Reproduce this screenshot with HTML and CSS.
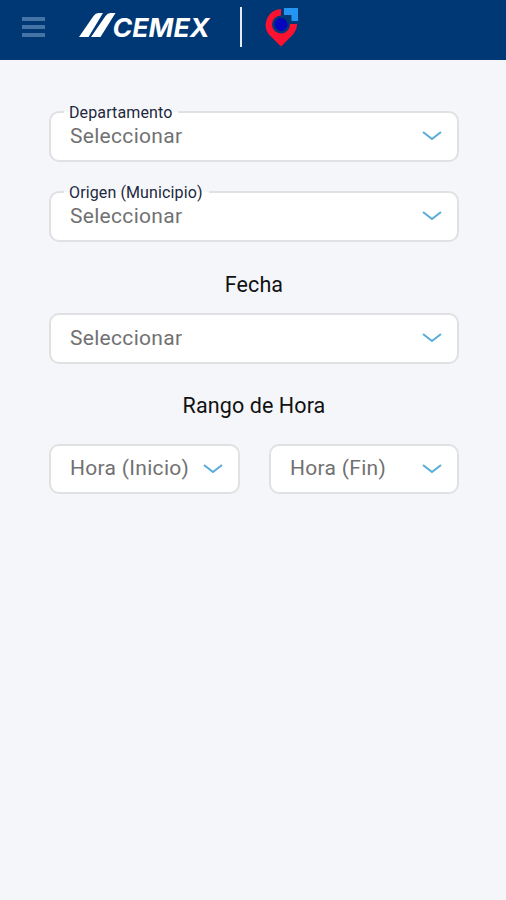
FILE: index.html
```html
<!DOCTYPE html>
<html lang="es">
<head>
    <meta charset="UTF-8">
    <meta name="viewport" content="width=device-width, initial-scale=1.0">
    <title>CEMEX</title>
    <link rel="stylesheet" href="styles.css">
</head>
<body>
    <header class="navbar">
        <button class="menu-button" type="button" aria-label="Menu">
            <span></span>
            <span></span>
            <span></span>
        </button>
        <svg class="logo" width="134" height="30" viewBox="0 0 134 30">
            <path d="M0 25 L14.500 4 Q16.500 1 19.500 1 H24 L9.500 25 Z M12 25 L26.500 4 Q28.500 1 31.500 1 H36.500 L21.500 25 Z" fill="#fff"/>
            <text class="logo-text" x="33.500" y="25" textLength="97" lengthAdjust="spacingAndGlyphs">CEMEX</text>
        </svg>
        <span class="divider"></span>
        <svg class="pin" width="36" height="40" viewBox="0 0 36 40">
            <path d="M17 2 A16 16 0 0 0 4.500 27 L17 39.500 L29.500 27 Q33.500 22 33 17 H26 A9 9 0 1 1 17 8.500 Z" fill="#fb1230"/>
            <circle cx="17" cy="17.500" r="6.500" fill="#0505bd"/>
            <path d="M20 1 H34 V14 H27.500 V8 H20 Z" fill="#2595f3"/>
        </svg>
    </header>

    <main class="form-container">
        <div class="select-field">
            <span class="field-label">Departamento</span>
            <span class="field-value">Seleccionar</span>
            <svg class="chevron" width="20" height="12" viewBox="0 0 20 12"><path d="M1 2 L10 9 L19 2"/></svg>
        </div>
        <div class="select-field">
            <span class="field-label">Origen (Municipio)</span>
            <span class="field-value">Seleccionar</span>
            <svg class="chevron" width="20" height="12" viewBox="0 0 20 12"><path d="M1 2 L10 9 L19 2"/></svg>
        </div>

        <h2 class="section-title">Fecha</h2>
        <div class="select-field">
            <span class="field-value">Seleccionar</span>
            <svg class="chevron" width="20" height="12" viewBox="0 0 20 12"><path d="M1 2 L10 9 L19 2"/></svg>
        </div>

        <h2 class="section-title section-title-hour">Rango de Hora</h2>
        <div class="hour-row">
            <div class="select-field">
                <span class="field-value">Hora (Inicio)</span>
                <svg class="chevron" width="20" height="12" viewBox="0 0 20 12"><path d="M1 2 L10 9 L19 2"/></svg>
            </div>
            <div class="select-field">
                <span class="field-value">Hora (Fin)</span>
                <svg class="chevron" width="20" height="12" viewBox="0 0 20 12"><path d="M1 2 L10 9 L19 2"/></svg>
            </div>
        </div>
    </main>
</body>
</html>
```
FILE: styles.css
```css
* {
  box-sizing: border-box;
}

body {
  margin: 0;
  min-height: 100vh;
  background-color: #f4f6fa;
  font-family: Roboto, "Liberation Sans", sans-serif;
}

.navbar {
  display: flex;
  align-items: center;
  height: 60px;
  padding: 0 22px 6px;
  background-color: #003876;
}

.menu-button {
  display: flex;
  flex-direction: column;
  gap: 4px;
  width: 23px;
  padding: 0;
  border: none;
  background: none;
  cursor: pointer;
}

.menu-button span {
  height: 4px;
  background-color: #4573a6;
}

.logo {
  margin-left: 34px;
}

.logo-text {
  fill: #fff;
  font-family: Inter, "Liberation Sans", sans-serif;
  font-size: 26px;
  font-weight: 700;
  font-style: italic;
}

.divider {
  width: 2px;
  height: 40px;
  margin-left: 27px;
  background-color: #e3ebf5;
}

.pin {
  margin-left: 22px;
}

.form-container {
  padding: 51px 47px 0 49px;
}

.select-field {
  position: relative;
  display: flex;
  justify-content: space-between;
  align-items: center;
  height: 51px;
  padding: 0 15px 1px 19px;
  border: 2px solid #e0e1e3;
  border-radius: 10px;
  background-color: #fff;
}

.select-field + .select-field {
  margin-top: 29px;
}

/* label sits on the top border of the field */
.field-label {
  position: absolute;
  top: -9px;
  left: 13px;
  padding: 0 6px 0 5px;
  background: linear-gradient(#f4f6fa 8px, #fff 8px);
  color: #1d2940;
  font-size: 16px;
  line-height: 18px;
  letter-spacing: 0.12px;
}

.field-value {
  padding-bottom: 1px;
  color: #717171;
  font-size: 21px;
  letter-spacing: 0.3px;
}

.chevron path {
  fill: none;
  stroke: #58acd8;
  stroke-width: 2;
}

.section-title {
  margin: 29px 0 15px;
  color: #111;
  font-size: 21.5px;
  font-weight: 400;
  line-height: 27px;
  letter-spacing: 0.1px;
  text-align: center;
}

.section-title-hour {
  margin: 28px 0 25px;
}

.hour-row {
  display: grid;
  grid-template-columns: 191px 190px;
  justify-content: space-between;
}

.hour-row .select-field {
  height: 50px;
  margin-top: 0;
}
```
